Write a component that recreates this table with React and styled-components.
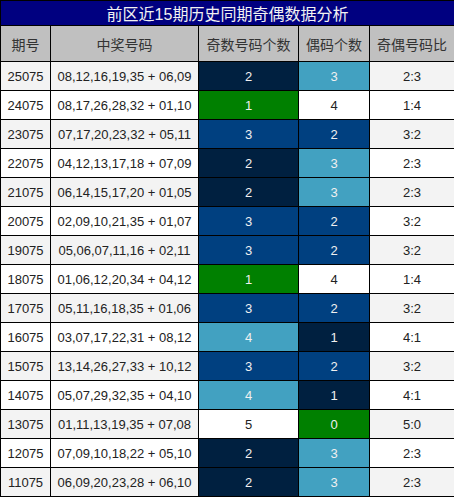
import React from "react";
import styled, { createGlobalStyle } from "styled-components";

const GlobalStyle = createGlobalStyle`
  body {
    margin: 0;
    background: #ffffff;
    font-family: "Liberation Sans", "Noto Sans CJK SC", sans-serif;
  }
`;

const Table = styled.table`
  width: 454px;
  border-collapse: collapse;
  table-layout: fixed;
`;

const TitleCell = styled.th`
  height: 24px;
  padding: 0;
  background: #000080;
  color: #f2f2f2;
  font-size: 16px;
  font-weight: normal;
  border: 1px solid #000;
  text-align: center;
`;

const HeadCell = styled.th`
  height: 35px;
  padding: 0;
  background: #c0c0c0;
  color: #333;
  font-size: 14px;
  font-weight: normal;
  border: 1px solid #000;
  text-align: center;
`;

const Cell = styled.td`
  height: 28px;
  padding: 0;
  border: 1px solid #000;
  text-align: center;
  font-size: 13px;
  color: ${p => (p.$dark ? "#f0f0f0" : "#222")};
  background: ${p => p.$bg};
`;

const COLORS = {
  green: "#008000",
  dark: "#002040",
  blue: "#004080",
  light: "#42a1c1",
  white: "#ffffff"
};

// odd count 1..5 / even count 0..4
const oddColor = ["white", "green", "dark", "blue", "light", "white"];
const evenColor = ["green", "dark", "blue", "light", "white"];

const rows = [
  ["25075", "08,12,16,19,35 + 06,09", 2],
  ["24075", "08,17,26,28,32 + 01,10", 1],
  ["23075", "07,17,20,23,32 + 05,11", 3],
  ["22075", "04,12,13,17,18 + 07,09", 2],
  ["21075", "06,14,15,17,20 + 01,05", 2],
  ["20075", "02,09,10,21,35 + 01,07", 3],
  ["19075", "05,06,07,11,16 + 02,11", 3],
  ["18075", "01,06,12,20,34 + 04,12", 1],
  ["17075", "05,11,16,18,35 + 01,06", 3],
  ["16075", "03,07,17,22,31 + 08,12", 4],
  ["15075", "13,14,26,27,33 + 10,12", 3],
  ["14075", "05,07,29,32,35 + 04,10", 4],
  ["13075", "01,11,13,19,35 + 07,08", 5],
  ["12075", "07,09,10,18,22 + 05,10", 2],
  ["11075", "06,09,20,23,28 + 06,10", 2]
];

const ColorCell = ({ name, value }) => (
  <Cell $bg={COLORS[name]} $dark={name !== "white"}>
    {value}
  </Cell>
);

export default function App() {
  return (
    <>
      <GlobalStyle />
      <Table>
        <colgroup>
          <col style={{ width: 50 }} />
          <col style={{ width: 148 }} />
          <col style={{ width: 100 }} />
          <col style={{ width: 71 }} />
          <col style={{ width: 85 }} />
        </colgroup>
        <thead>
          <tr>
            <TitleCell colSpan={5}>前区近15期历史同期奇偶数据分析</TitleCell>
          </tr>
          <tr>
            <HeadCell>期号</HeadCell>
            <HeadCell>中奖号码</HeadCell>
            <HeadCell>奇数号码个数</HeadCell>
            <HeadCell>偶码个数</HeadCell>
            <HeadCell>奇偶号码比</HeadCell>
          </tr>
        </thead>
        <tbody>
          {rows.map(([issue, nums, odd], i) => {
            const even = 5 - odd;
            const stripe = i % 2 === 0 ? "#f3f3f3" : "#ffffff";
            return (
              <tr key={issue}>
                <Cell $bg={stripe}>{issue}</Cell>
                <Cell $bg={stripe}>{nums}</Cell>
                <ColorCell name={oddColor[odd]} value={odd} />
                <ColorCell name={evenColor[even]} value={even} />
                <Cell $bg={stripe}>
                  {odd}:{even}
                </Cell>
              </tr>
            );
          })}
        </tbody>
      </Table>
    </>
  );
}
